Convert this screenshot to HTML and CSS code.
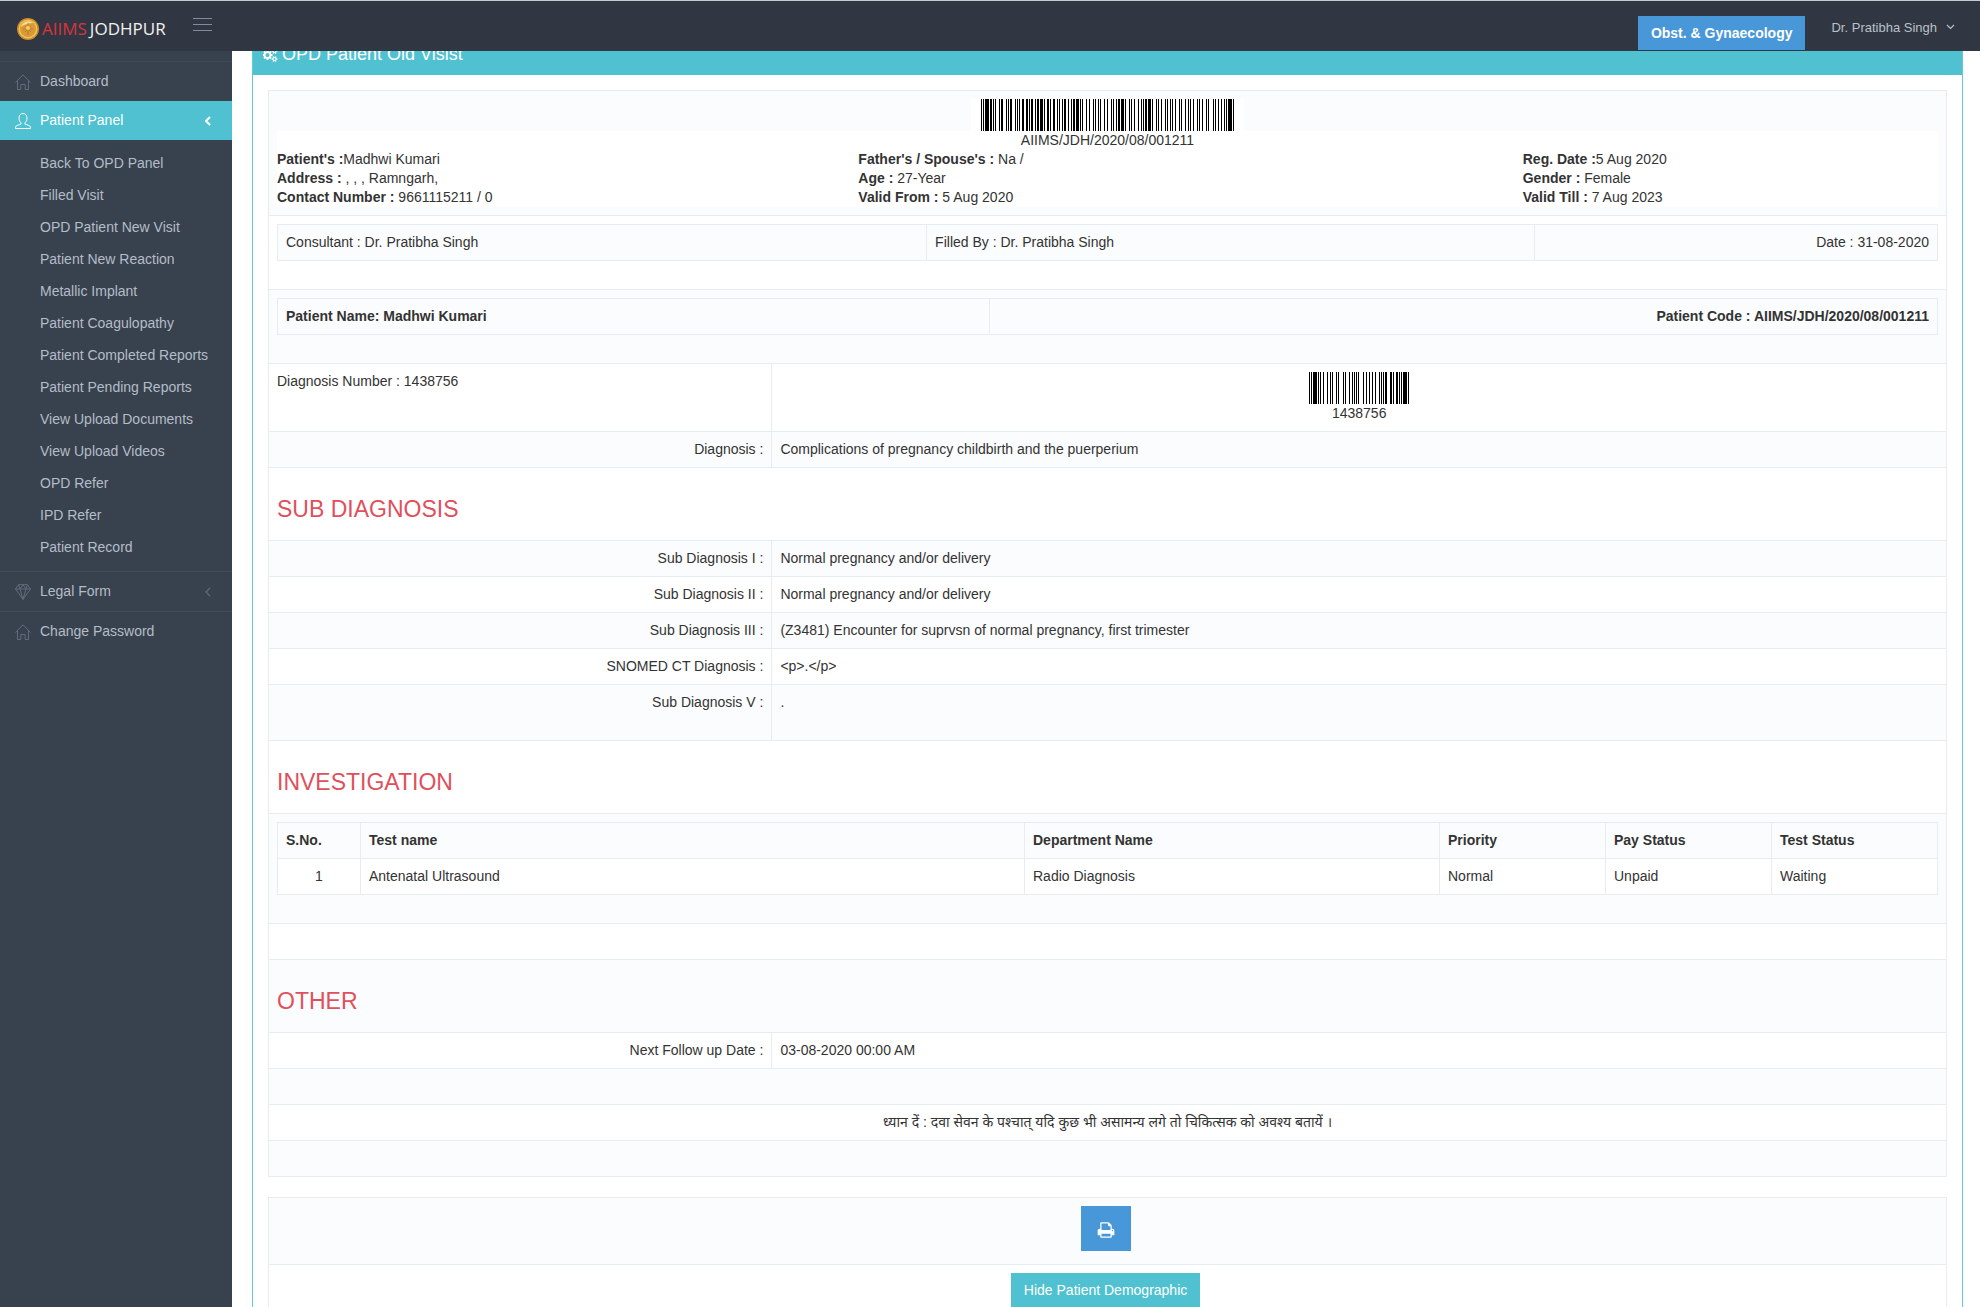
FILE: index.html
```html
<!DOCTYPE html>
<html lang="en">
<head>
    <meta charset="UTF-8">
    <meta name="viewport" content="width=device-width, initial-scale=1.0">
    <title>AIIMS Jodhpur</title>
    <link rel="stylesheet" href="styles.css">
</head>
<body>
    <header class="page-header">
        <a href="#" class="logo">
            <svg class="coin" viewBox="0 0 22 22">
                <circle cx="11" cy="11" r="11" fill="#c98a2b"/>
                <circle cx="11" cy="11" r="9.5" fill="#eec35c"/>
                <circle cx="11" cy="11" r="8" fill="#d99a33"/>
                <path d="M4 9a7.500 7.500 0 0 1 12-4c-4 0-8 1-12 4z" fill="#f7dd8c"/>
                <path d="M11 5v12M8 8l6 6M14 8l-6 6M6 11h10" stroke="#b97c28" fill="none"/>
                <circle cx="11" cy="10" r="2" fill="#f3cf6f"/>
            </svg>
            <span class="red">AIIMS</span> <span>JODHPUR</span>
        </a>
        <button class="toggler" type="button" aria-label="Toggle menu"><i></i><i></i><i></i></button>
        <div class="top-menu">
            <button class="btn blue dept" type="button">Obst. &amp; Gynaecology</button>
            <a href="#" class="user">Dr. Pratibha Singh
                <svg width="9" height="6" viewBox="0 0 9 6"><path d="M1 1l3.500 3.500L8 1" fill="none" stroke="currentColor" stroke-width="1.200"/></svg>
            </a>
        </div>
    </header>

    <nav class="sidebar">
        <ul class="menu">
            <li>
                <a href="#">
                    <svg class="icon" viewBox="0 0 16 16"><path d="M.5 8.500L8 .8l7.500 7.700M2.500 7v8.500h3.300v-5h4.400v5h3.300V7"/></svg>
                    Dashboard
                </a>
            </li>
            <li class="active">
                <a href="#">
                    <svg class="icon" viewBox="0 0 16 16"><path d="M6 9.800C4.600 8.700 4 6.900 4 5c0-2.700 1.600-4.500 4-4.500S12 2.300 12 5c0 1.900-.6 3.700-2 4.800v1.400c1.500.7 5 1 5.500 2.800v1.500H.5V14c.5-1.800 4-2.100 5.500-2.800z"/></svg>
                    Patient Panel
                    <svg class="arrow" viewBox="0 0 6 10"><path d="M5 1L1 5l4 4"/></svg>
                </a>
                <ul class="sub-menu">
                    <li><a href="#">Back To OPD Panel</a></li>
                    <li><a href="#">Filled Visit</a></li>
                    <li><a href="#">OPD Patient New Visit</a></li>
                    <li><a href="#">Patient New Reaction</a></li>
                    <li><a href="#">Metallic Implant</a></li>
                    <li><a href="#">Patient Coagulopathy</a></li>
                    <li><a href="#">Patient Completed Reports</a></li>
                    <li><a href="#">Patient Pending Reports</a></li>
                    <li><a href="#">View Upload Documents</a></li>
                    <li><a href="#">View Upload Videos</a></li>
                    <li><a href="#">OPD Refer</a></li>
                    <li><a href="#">IPD Refer</a></li>
                    <li><a href="#">Patient Record</a></li>
                </ul>
            </li>
            <li>
                <a href="#">
                    <svg class="icon" viewBox="0 0 16 16"><path d="M3.500.7h9l3 4.300L8 15.400.5 5zM.5 5h15M3.500.7L5 5l3 10.400L11 5l1.500-4.300M5 5l3-4.300L11 5"/></svg>
                    Legal Form
                    <svg class="arrow" viewBox="0 0 6 10"><path d="M5 1L1 5l4 4"/></svg>
                </a>
            </li>
            <li>
                <a href="#">
                    <svg class="icon" viewBox="0 0 16 16"><path d="M.5 8.500L8 .8l7.500 7.700M2.500 7v8.500h3.300v-5h4.400v5h3.300V7"/></svg>
                    Change Password
                </a>
            </li>
        </ul>
    </nav>

    <main class="page-content">
        <div class="portlet">
            <div class="portlet-title">
                <svg class="cogs" viewBox="0 0 1920 1792"><path fill="currentColor" d="M832 896q0-106-75-181t-181-75-181 75-75 181 75 181 181 75 181-75 75-181zm768 512q0-52-38-90t-90-38-90 38-38 90q0 53 37.500 90.500t90.500 37.500 90.500-37.500 37.500-90.500zm0-1024q0-52-38-90t-90-38-90 38-38 90q0 53 37.500 90.500t90.500 37.500 90.500-37.500 37.500-90.500zm-384 421v185q0 10-7 19.500t-16 10.500l-155 24q-11 35-32 76 34 48 90 115 7 11 7 20 0 12-7 19-23 30-82.500 89.500t-78.500 59.500q-11 0-21-7l-115-90q-37 19-77 31-11 108-23 155-7 24-30 24h-186q-11 0-20-7.500t-10-17.500l-23-153q-34-10-75-31l-118 89q-7 7-20 7-11 0-21-8-144-133-144-160 0-9 7-19 10-14 41-53t47-61q-23-44-35-82l-152-24q-10-1-17-9.500t-7-19.500v-185q0-10 7-19.500t16-10.500l155-24q11-35 32-76-34-48-90-115-7-11-7-20 0-12 7-20 22-30 82-89t79-59q11 0 21 7l115 90q34-18 77-32 11-108 23-154 7-24 30-24h186q11 0 20 7.500t10 17.500l23 153q34 10 75 31l118-89q8-7 20-7 11 0 21 8 144 133 144 160 0 8-7 19-12 16-42 54t-45 60q23 48 34 82l152 23q10 2 17 10.500t7 19.500zm640 533v140q0 16-149 31-12 27-30 52 51 113 51 138 0 4-4 7-122 71-124 71-8 0-46-47t-52-68q-20 2-30 2t-30-2q-14 21-52 68t-46 47q-2 0-124-71-4-3-4-7 0-25 51-138-18-25-30-52-149-15-149-31v-140q0-16 149-31 13-29 30-52-51-113-51-138 0-4 4-7 4-2 35-20t59-34 30-16q8 0 46 46.500t52 67.500q20-2 30-2t30 2q51-71 92-112l6-2q4 0 124 70 4 3 4 7 0 25-51 138 17 23 30 52 149 15 149 31zm0-1024v140q0 16-149 31-12 27-30 52 51 113 51 138 0 4-4 7-122 71-124 71-8 0-46-47t-52-68q-20 2-30 2t-30-2q-14 21-52 68t-46 47q-2 0-124-71-4-3-4-7 0-25 51-138-18-25-30-52-149-15-149-31v-140q0-16 149-31 13-29 30-52-51-113-51-138 0-4 4-7 4-2 35-20t59-34 30-16q8 0 46 46.500t52 67.500q20-2 30-2t30 2q51-71 92-112l6-2q4 0 124 70 4 3 4 7 0 25-51 138 17 23 30 52 149 15 149 31z"/></svg>
                <span>OPD Patient Old Visist</span>
            </div>
            <div class="portlet-body">
                <table class="table main">
                    <colgroup>
                        <col class="w30">
                        <col>
                    </colgroup>
                    <tr>
                        <td colspan="2">
                            <div class="barcode" data-code="AIIMS/JDH/2020/08/001211"></div>
                            <div class="demographic">
                                <div class="code">AIIMS/JDH/2020/08/001211</div>
                                <div><b>Patient's :</b>Madhwi Kumari<br><b>Address :</b> , , , Ramngarh,<br><b>Contact Number :</b> 9661115211 / 0</div>
                                <div><b>Father's / Spouse's :</b> Na /<br><b>Age :</b> 27-Year<br><b>Valid From :</b> 5 Aug 2020</div>
                                <div><b>Reg. Date :</b>5 Aug 2020<br><b>Gender :</b> Female<br><b>Valid Till :</b> 7 Aug 2023</div>
                            </div>
                        </td>
                    </tr>
                    <tr>
                        <td colspan="2">
                            <table class="table">
                                <tr>
                                    <td>Consultant : Dr. Pratibha Singh</td>
                                    <td>Filled By : Dr. Pratibha Singh</td>
                                    <td class="right">Date : 31-08-2020</td>
                                </tr>
                            </table>
                        </td>
                    </tr>
                    <tr>
                        <td colspan="2">
                            <table class="table">
                                <tr>
                                    <th>Patient Name: Madhwi Kumari</th>
                                    <th class="right">Patient Code : AIIMS/JDH/2020/08/001211</th>
                                </tr>
                            </table>
                        </td>
                    </tr>
                    <tr>
                        <td>Diagnosis Number : 1438756</td>
                        <td class="center">
                            <div class="barcode" data-code="1438756"></div>
                            1438756
                        </td>
                    </tr>
                    <tr>
                        <td class="right">Diagnosis :</td>
                        <td>Complications of pregnancy childbirth and the puerperium</td>
                    </tr>
                    <tr>
                        <td colspan="2"><h3>SUB DIAGNOSIS</h3></td>
                    </tr>
                    <tr>
                        <td class="right">Sub Diagnosis I :</td>
                        <td>Normal pregnancy and/or delivery</td>
                    </tr>
                    <tr>
                        <td class="right">Sub Diagnosis II :</td>
                        <td>Normal pregnancy and/or delivery</td>
                    </tr>
                    <tr>
                        <td class="right">Sub Diagnosis III :</td>
                        <td>(Z3481) Encounter for suprvsn of normal pregnancy, first trimester</td>
                    </tr>
                    <tr>
                        <td class="right">SNOMED CT Diagnosis :</td>
                        <td>&lt;p&gt;.&lt;/p&gt;</td>
                    </tr>
                    <tr>
                        <td class="right">Sub Diagnosis V :</td>
                        <td><p>.</p></td>
                    </tr>
                    <tr>
                        <td colspan="2"><h3>INVESTIGATION</h3></td>
                    </tr>
                    <tr>
                        <td colspan="2">
                            <table class="table">
                                <colgroup><col class="w5"><col class="w40"><col class="w25"><col class="w10"><col class="w10"><col class="w10"></colgroup>
                                <tr>
                                    <th>S.No.</th>
                                    <th>Test name</th>
                                    <th>Department Name</th>
                                    <th>Priority</th>
                                    <th>Pay Status</th>
                                    <th>Test Status</th>
                                </tr>
                                <tr>
                                    <td class="center">1</td>
                                    <td>Antenatal Ultrasound</td>
                                    <td>Radio Diagnosis</td>
                                    <td>Normal</td>
                                    <td>Unpaid</td>
                                    <td>Waiting</td>
                                </tr>
                            </table>
                        </td>
                    </tr>
                    <tr>
                        <td colspan="2">&nbsp;</td>
                    </tr>
                    <tr>
                        <td colspan="2"><h3>OTHER</h3></td>
                    </tr>
                    <tr>
                        <td class="right">Next Follow up Date :</td>
                        <td>03-08-2020 00:00 AM</td>
                    </tr>
                    <tr>
                        <td colspan="2">&nbsp;</td>
                    </tr>
                    <tr>
                        <td colspan="2" class="center" lang="hi">ध्यान दें : दवा सेवन के पश्चात् यदि कुछ भी असामन्य लगे तो चिकित्सक को अवश्य बतायें ।</td>
                    </tr>
                    <tr>
                        <td colspan="2">&nbsp;</td>
                    </tr>
                </table>

                <table class="table">
                    <tr>
                        <td class="center">
                            <button class="btn blue print" type="button" aria-label="Print">
                                <svg width="18" height="18" viewBox="0 0 1792 1792"><path fill="currentColor" d="M448 1536h896v-256h-896v256zm0-640h896v-384h-160q-40 0-68-28t-28-68v-160h-640v640zm1152 64q0-26-19-45t-45-19-45 19-19 45 19 45 45 19 45-19 19-45zm128 0v416q0 13-9.500 22.500t-22.500 9.500h-224v160q0 40-28 68t-68 28h-960q-40 0-68-28t-28-68v-160h-224q-13 0-22.500-9.500t-9.500-22.500v-416q0-79 56.500-135.500t135.500-56.500h64v-544q0-40 28-68t68-28h672q40 0 88 20t76 48l152 152q28 28 48 76t20 88v256h64q79 0 135.500 56.500t56.500 135.500z"/></svg>
                            </button>&nbsp;
                        </td>
                    </tr>
                    <tr>
                        <td class="center"><button class="btn teal" type="button">Hide Patient Demographic</button>&nbsp;</td>
                    </tr>
                </table>
            </div>
        </div>
    </main>
    <script src="barcode.js"></script>
</body>
</html>
```

FILE: styles.css
```css
*{
    box-sizing:border-box;
    padding:0;
    margin:0;
}
body{
    background-color:#fff;
    color:#333;
    font-family:"Liberation Sans", "Noto Sans", sans-serif;
    font-size:14px;
    line-height:19px;
}
ul{
    list-style:none;
}
a{
    text-decoration:none;
    color:inherit;
}

/* header */
.page-header{
    position:fixed;
    top:0;
    left:0;
    right:0;
    z-index:10;
    height:51px;
    display:flex;
    align-items:flex-start;
    background-color:#303742;
    border-top:1px solid #c8cbcd;
}
.logo{
    width:193px;
    padding:16px 0 0 17px;
    display:flex;
    align-items:center;
    gap:3px;
    font-family:"Open Sans", "Noto Sans", sans-serif;
    font-size:17px;
    line-height:24px;
    color:#f1f1f1;
}
.logo .red{
    color:#d8343f;
}
.coin{
    width:22px;
    height:22px;
    flex:none;
}
.toggler{
    width:19px;
    margin-top:17px;
    border:0;
    background:none;
    display:flex;
    flex-direction:column;
    gap:5px;
    cursor:pointer;
}
.toggler i{
    width:100%;
    height:1px;
    background-color:#7f8d9d;
}
.top-menu{
    margin-left:auto;
    padding:15px 25px 0 0;
    display:flex;
    gap:26px;
}
.user{
    display:flex;
    align-items:center;
    gap:9px;
    height:22px;
    font-size:13px;
    color:#bac0ca;
}
.btn{
    height:34px;
    padding:0 13px;
    border:0;
    color:#fff;
    font-family:inherit;
    font-size:14px;
    line-height:20px;
    vertical-align:top;
    cursor:pointer;
}
.blue{
    background-color:#4897d8;
}
.teal{
    background-color:#4fc1d0;
}
.dept{
    font-weight:bold;
}

/* sidebar */
.sidebar{
    position:fixed;
    top:51px;
    left:0;
    bottom:0;
    width:232px;
    padding-top:10px;
    background-color:#38424e;
    color:#b4bcc8;
}
.menu > li{
    border-top:1px solid #3f4a58;
}
.menu > li > a{
    display:flex;
    align-items:center;
    height:39px;
    padding:0 21px 0 15px;
    gap:9px;
}
.menu > .active > a{
    background-color:#4fc1d0;
    color:#fff;
}
.menu > .active{
    border-top:0;
}
.icon{
    width:16px;
    height:16px;
    fill:none;
    stroke:#606c7d;
}
.arrow{
    width:6px;
    height:10px;
    margin-left:auto;
    fill:none;
    stroke:#606c7d;
    stroke-width:1.2px;
}
.active .icon{
    stroke:#fff;
}
.active .arrow{
    stroke:#fff;
    stroke-width:2px;
}
.sub-menu{
    padding:7px 0 8px 40px;
}
.sub-menu a{
    display:block;
    line-height:32px;
}

/* content */
.page-content{
    margin-left:232px;
    padding:34px 17px 0 20px;
}
.portlet{
    border:1px solid #5fc9d5;
    border-top:0;
}
.portlet-title{
    height:41px;
    padding:0 10px;
    display:flex;
    align-items:center;
    gap:4px;
    background-color:#4fc1d0;
    color:#fff;
    font-size:18px;
}
.cogs{
    width:15px;
    height:14px;
}
.portlet-body{
    padding:15px;
}
.table{
    width:100%;
    margin-bottom:20px;
    border-collapse:collapse;
    border:1px solid #e7ecf1;
}
.main{
    table-layout:fixed;
}
.table td,
.table th{
    padding:8px;
    border:1px solid #e7ecf1;
    text-align:left;
    vertical-align:top;
}
.table tr:nth-child(odd){
    background-color:#fbfcfd;
}
.table tr:nth-child(even){
    background-color:#fff;
}
.table .right{
    text-align:right;
}
.table .center{
    text-align:center;
}
.w5{ width:5%; }
.w10{ width:10%; }
.w25{ width:25%; }
.w30{ width:30%; }
.w40{ width:40%; }
h3{
    margin:20px 0 10px;
    font-size:23px;
    line-height:26px;
    font-weight:normal;
    color:#e0505c;
}
.table p{
    margin-bottom:20px;
}
.barcode{
    width:fit-content;
    margin:0 auto;
    padding:0 10px;
    background-color:#fff;
}
.barcode svg{
    display:block;
}
.demographic{
    display:grid;
    grid-template-columns:35% 40% 25%;
    background-color:#fff;
}
.demographic .code{
    grid-column:1 / 4;
    text-align:center;
}
.print{
    width:50px;
    height:45px;
    margin-bottom:5px;
}
.print svg{
    vertical-align:middle;
}
```

FILE: barcode.js
```js
// Code 93 barcodes, one pixel per module
var chars = '0123456789ABCDEFGHIJKLMNOPQRSTUVWXYZ-. $/+%';
var patterns = [
    '100010100', '101001000', '101000100', '101000010', '100101000',
    '100100100', '100100010', '101010000', '100010010', '100001010',
    '110101000', '110100100', '110100010', '110010100', '110010010',
    '110001010', '101101000', '101100100', '101100010', '100110100',
    '100011010', '101011000', '101001100', '101000110', '100101100',
    '100010110', '110110100', '110110010', '110101100', '110100110',
    '110010110', '110011010', '101101100', '101100110', '100110110',
    '100111010', '100101110', '111010100', '111010010', '111001010',
    '101101110', '101110110', '110101110', '100100110', '111011010',
    '111010110', '100110010'
];
var edge = '101011110';

function checkValue(values, max){
    var sum = 0;
    for(var i=0; i<values.length; i++){
        sum += values[values.length - 1 - i] * (i % max + 1);
    }
    return sum % 47;
}

function encode(text){
    var values = text.split('').map(function(c){ return chars.indexOf(c); });
    values.push(checkValue(values, 20));
    values.push(checkValue(values, 15));
    return edge + values.map(function(v){ return patterns[v]; }).join('') + edge + '1';
}

var boxes = document.querySelectorAll('.barcode');
for(var i=0; i<boxes.length; i++){
    var bits = encode(boxes[i].getAttribute('data-code'));
    var bars = '';
    // one rect for each run of black modules
    bits.replace(/1+/g, function(run, at){
        bars += '<rect x="' + at + '" width="' + run.length + '" height="32"/>';
    });
    boxes[i].innerHTML = '<svg width="' + bits.length + '" height="32">' + bars + '</svg>';
}
```
